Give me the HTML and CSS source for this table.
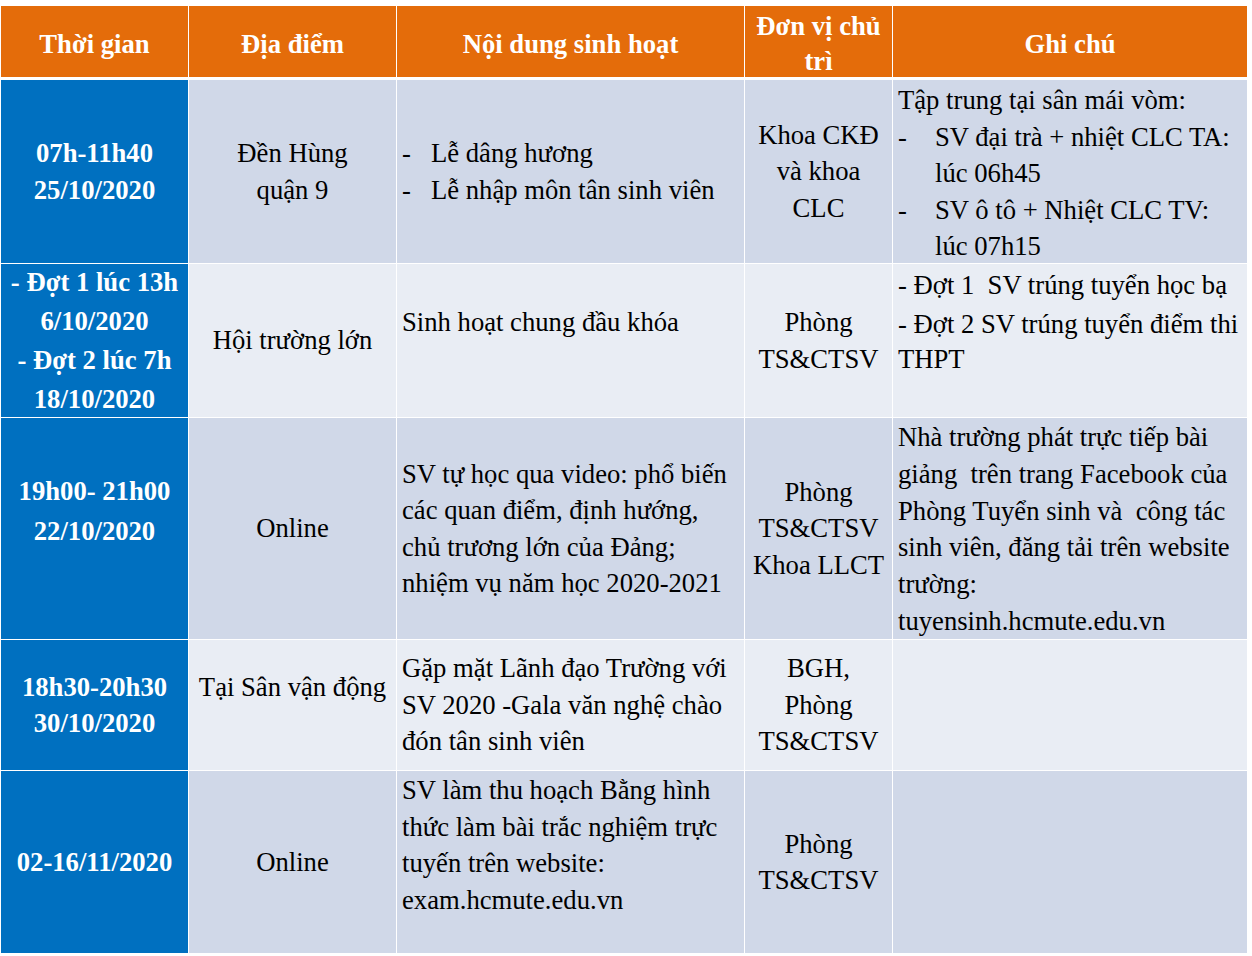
FILE: index.html
```html
<!DOCTYPE html>
<html lang="vi">
<head>
<meta charset="utf-8">
<title>Lịch sinh hoạt</title>
<link rel="stylesheet" href="styles.css">
</head>
<body>
<main class="schedule">
  <div class="hd">Thời gian</div>
  <div class="hd">Địa điểm</div>
  <div class="hd">Nội dung sinh hoạt</div>
  <div class="hd hd-two">Đơn vị chủ<br>trì</div>
  <div class="hd">Ghi chú</div>

  <div class="cell time dark">07h-11h40<br>25/10/2020</div>
  <div class="cell mid dark">Đền Hùng<br>quận 9</div>
  <div class="cell left dark">
    <p class="li li-c3"><span class="dash">-</span>Lễ dâng hương</p>
    <p class="li li-c3"><span class="dash">-</span>Lễ nhập môn tân sinh viên</p>
  </div>
  <div class="cell mid dark">Khoa CKĐ<br>và khoa<br>CLC</div>
  <div class="cell note dark r1note">
    <p class="para">Tập trung tại sân mái vòm:</p>
    <p class="li li-c5"><span class="dash">-</span><span>SV đại trà + nhiệt CLC TA:<br>lúc 06h45</span></p>
    <p class="li li-c5"><span class="dash">-</span><span>SV ô tô + Nhiệt CLC TV:<br>lúc 07h15</span></p>
  </div>

  <div class="cell time light lh39">- Đợt 1 lúc 13h<br>6/10/2020<br>- Đợt 2 lúc 7h<br>18/10/2020</div>
  <div class="cell mid light">Hội trường lớn</div>
  <div class="cell left light top r2c3">Sinh hoạt chung đầu khóa</div>
  <div class="cell mid light">Phòng<br>TS&amp;CTSV</div>
  <div class="cell note light r2note">
    <p class="para first">- Đợt 1&nbsp; SV trúng tuyển học bạ</p>
    <p class="para">- Đợt 2 SV trúng tuyển điểm thi<br>THPT</p>
  </div>

  <div class="cell time dark lh40 r3c1">19h00- 21h00<br>22/10/2020</div>
  <div class="cell mid dark">Online</div>
  <div class="cell left dark">SV tự học qua video: phổ biến<br>các quan điểm, định hướng,<br>chủ trương lớn của Đảng;<br>nhiệm vụ năm học 2020-2021</div>
  <div class="cell mid dark">Phòng<br>TS&amp;CTSV<br>Khoa LLCT</div>
  <div class="cell note dark r3note">Nhà trường phát trực tiếp bài<br>giảng&nbsp; trên trang Facebook của<br>Phòng Tuyển sinh và&nbsp; công tác<br>sinh viên, đăng tải trên website<br>trường:<br>tuyensinh.hcmute.edu.vn</div>

  <div class="cell time light">18h30-20h30<br>30/10/2020</div>
  <div class="cell mid light r4c2">Tại Sân vận động</div>
  <div class="cell left light">Gặp mặt Lãnh đạo Trường với<br>SV 2020 -Gala văn nghệ chào<br>đón tân sinh viên</div>
  <div class="cell mid light">BGH,<br>Phòng<br>TS&amp;CTSV</div>
  <div class="cell note light"></div>

  <div class="cell time dark">02-16/11/2020</div>
  <div class="cell mid dark">Online</div>
  <div class="cell left dark top r5c3">SV làm thu hoạch Bằng hình<br>thức làm bài trắc nghiệm trực<br>tuyến trên website:<br>exam.hcmute.edu.vn</div>
  <div class="cell mid dark">Phòng<br>TS&amp;CTSV</div>
  <div class="cell note dark"></div>
</main>
</body>
</html>
```

FILE: styles.css
```css
html, body {
  margin: 0;
  padding: 0;
  background: #ffffff;
}

body {
  font-family: "Liberation Serif", serif;
  color: #000000;
}

.schedule {
  display: grid;
  grid-template-columns: 187px 207px 347px 147px 354px;
  grid-template-rows: 73px 183px 153px 221px 130px 182px;
  column-gap: 1px;
  row-gap: 1px;
  margin: 6px 0 0 1px;
  width: 1246px;
  background: #ffffff;
}

.schedule,
.hd,
.cell,
.li,
.para,
.dash {
  font-family: "Liberation Serif", serif;
}

.hd {
  background: #e46c0a;
  border-bottom: 2px solid #ffffff;
  color: #ffffff;
  font-weight: bold;
  font-size: 20pt;
  line-height: 35px;
  padding-top: 5px;
  box-sizing: border-box;
  display: flex;
  align-items: center;
  justify-content: center;
  text-align: center;
  white-space: nowrap;
}

.hd-two {
  padding-top: 4px;
}

.cell {
  font-size: 20pt;
  line-height: 36.5px;
  white-space: nowrap;
  display: flex;
  flex-direction: column;
  justify-content: center;
  box-sizing: border-box;
}

.dark { background: #d0d8e8; }
.light { background: #e9edf4; }

.time {
  background: #0070c0;
  color: #ffffff;
  font-weight: bold;
  text-align: center;
  align-items: center;
}

.lh39 { line-height: 39px; }
.lh40 { line-height: 40px; }

.mid {
  text-align: center;
  align-items: center;
}

.left {
  text-align: left;
  padding-left: 5px;
}

.top {
  justify-content: flex-start;
}

.note {
  justify-content: flex-start;
  padding-left: 5px;
}

.li {
  display: flex;
  margin: 0;
}

.dash {
  flex: none;
}

.li-c3 .dash {
  width: 29px;
}

.li-c5 .dash {
  width: 37px;
}

.r1note { padding-top: 2px; }

.r2c3 { padding-top: 40px; }

.r2note { padding-top: 4px; line-height: 35px; }

.para { margin: 0; }
.para.first { margin-bottom: 4px; }

.r3c1 { padding-bottom: 36px; }

.r3note { padding-top: 1px; line-height: 36.8px; }

.r4c2 { padding-bottom: 35px; }

.r5c3 { padding-top: 1px; line-height: 36.7px; }
```
